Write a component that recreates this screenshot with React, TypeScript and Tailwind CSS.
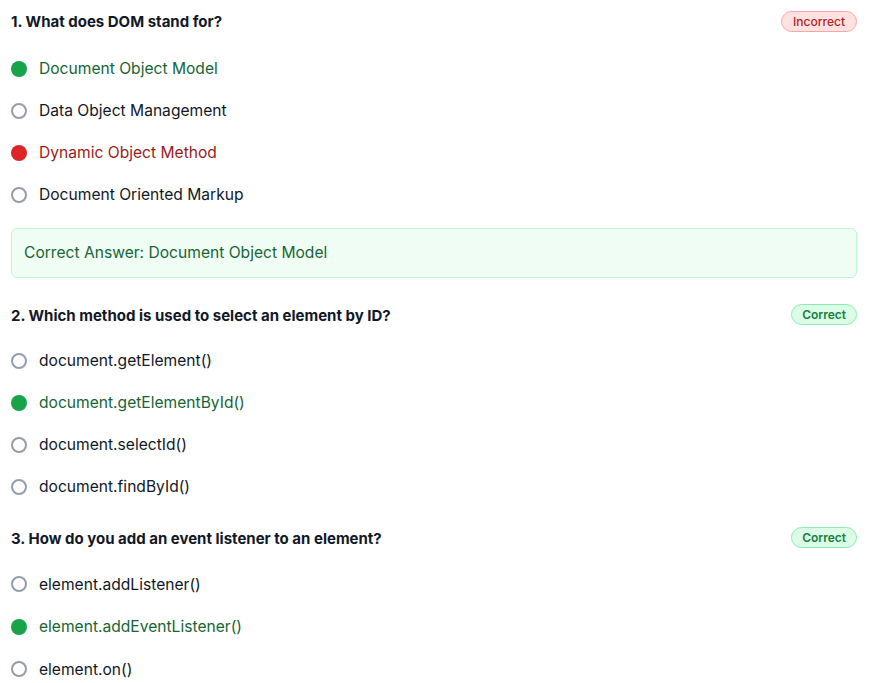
import React from "react";

type Question = {
  title: string;
  options: string[];
  correct: number;
  picked: number;
};

const questions: Question[] = [
  {
    title: "1. What does DOM stand for?",
    options: ["Document Object Model", "Data Object Management", "Dynamic Object Method", "Document Oriented Markup"],
    correct: 0,
    picked: 2,
  },
  {
    title: "2. Which method is used to select an element by ID?",
    options: ["document.getElement()", "document.getElementById()", "document.selectId()", "document.findById()"],
    correct: 1,
    picked: 1,
  },
  {
    title: "3. How do you add an event listener to an element?",
    options: ["element.addListener()", "element.addEventListener()", "element.on()", "element.listen()"],
    correct: 1,
    picked: 1,
  },
];

function Option({ text, state }: { text: string; state: "correct" | "wrong" | "none" }) {
  return (
    <div className="flex items-center gap-[12px] h-[42px]">
      {state === "correct" && <span className="w-4 h-4 rounded-full bg-[#16a34a] shrink-0" />}
      {state === "wrong" && <span className="w-4 h-4 rounded-full bg-[#dc2626] shrink-0" />}
      {state === "none" && <span className="w-4 h-4 rounded-full border-2 border-[#959dab] shrink-0" />}
      <span
        className={
          state === "correct"
            ? "text-[15.6px] text-[#166534]"
            : state === "wrong"
            ? "text-[15.6px] text-[#991b1b]"
            : "text-[15.6px] text-[#111827]"
        }
      >
        {text}
      </span>
    </div>
  );
}

export default function App() {
  return (
    <div className="w-[872px] h-[683px] overflow-hidden bg-white pl-[11px] pr-[15px] pt-[11px] font-['Inter',sans-serif]">
      {questions.map((q, i) => {
        const ok = q.picked === q.correct;
        return (
          <div key={i} className={i === 0 ? "" : i === 1 ? "mt-[26px]" : "mt-[19px]"}>
            <div className="flex items-center justify-between h-[21px]">
              <h3 className={i === 0 ? "text-[15px] font-bold text-[#111827] translate-y-[1px]" : "text-[15px] font-bold text-[#111827] translate-y-[2px]"}>
                {q.title}
              </h3>
              {ok ? (
                <span className="text-[12px] font-semibold leading-none text-[#15803d] bg-[#dcfce7] border border-[#86efac] rounded-full px-[10px] h-[21px] flex items-center">
                  Correct
                </span>
              ) : (
                <span className="text-[12px] font-medium leading-none text-[#b91c1c] bg-[#fee2e2] border border-[#fca5a5] rounded-full px-[11px] h-[21px] flex items-center">
                  Incorrect
                </span>
              )}
            </div>
            <div className={i === 0 ? "mt-[16px]" : i === 1 ? "mt-[15px]" : "mt-[15px] [&>div]:h-[42.5px]"}>
              {q.options.map((o, j) => (
                <Option
                  key={j}
                  text={o}
                  state={j === q.correct ? "correct" : j === q.picked ? "wrong" : "none"}
                />
              ))}
            </div>
            {!ok && (
              <div className="mt-[12px] h-[50px] flex items-center px-3 bg-[#f0fdf4] border border-[#bbf7d0] rounded-md text-[15.6px] text-[#166534]">
                Correct Answer: {q.options[q.correct]}
              </div>
            )}
          </div>
        );
      })}
    </div>
  );
}
